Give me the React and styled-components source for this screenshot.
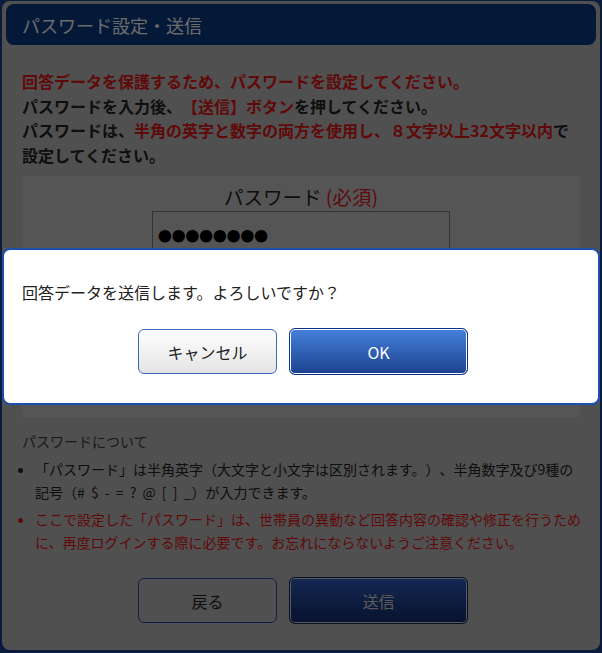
import React from "react";
import styled, { createGlobalStyle } from "styled-components";

const FONT = `"Noto Sans CJK JP", "Noto Sans", sans-serif`;

const Global = createGlobalStyle`
  html, body { margin: 0; padding: 0; background: #193e8e; }
  body {
    font-family: ${FONT};
    width: 602px;
    height: 653px;
    overflow: hidden;
    text-spacing-trim: space-all;
  }
  *, *::before, *::after { box-sizing: border-box; }
`;

const Page = styled.div`
  padding: 1px 2px 3px;
`;

const Panel = styled.section`
  background: #b6b6b6;
  border-radius: 8px;
  padding: 3px 4px 26px;
`;

const Header = styled.h1`
  margin: 0;
  height: 41px;
  display: flex;
  align-items: center;
  padding-left: 16px;
  background: #0b377f;
  border-radius: 8px;
  color: #f4f4f4;
  font-size: 18px;
  font-weight: 400;
`;

const Content = styled.div`
  padding: 0 16px;
`;

const Intro = styled.p`
  margin: 24px 0 0;
  font-size: 16px;
  line-height: 24.5px;
  font-weight: 700;
  color: #222;
`;

const Red = styled.span`
  color: #d81616;
`;

const FieldBox = styled.div`
  margin-top: 9px;
  height: 241px;
  background: #c1c1c1;
  display: flex;
  flex-direction: column;
  align-items: center;
  padding-top: 8px;
`;

const FieldLabel = styled.div`
  font-size: 19.5px;
  line-height: 26px;
  color: #222;
  margin-top: ${(p) => (p.$second ? "18px" : "0")};
`;

const FakeInput = styled.div`
  width: 298px;
  height: 40px;
  margin-top: 1px;
  border: 1px solid #747474;
  background: #c1c1c1;
  padding: 8px 5px 0;
  display: flex;
  align-items: center;
  font-size: 13.75px;
  color: #000;
`;

const About = styled.div`
  margin-top: 13px;
  font-size: 14px;
  line-height: 22px;
  color: #3a3a3a;
`;

const Notes = styled.ul`
  margin: 6px -3px 0 0;
  padding-left: 13px;
  list-style: disc outside;
`;

const Note = styled.li`
  font-size: 14px;
  line-height: 23px;
  color: ${(p) => (p.$red ? "#d81616" : "#222")};
  & + & {
    margin-top: 4px;
  }
`;

const Symbols = styled.span`
  word-spacing: 3px;
`;

const ButtonRow = styled.div`
  margin-top: ${(p) => p.$top || "0"};
  padding-left: 4px;
  display: flex;
  justify-content: center;
  align-items: center;
  gap: 12px;
`;

const Btn = styled.button`
  font-family: ${FONT};
  font-size: 16px;
  border-radius: 6px;
  cursor: pointer;
  padding: 0;
`;

const BackBtn = styled(Btn)`
  width: 139px;
  height: 45px;
  border: 1px solid #24489e;
  background: transparent;
  color: #222;
`;

const SendBtn = styled(Btn)`
  width: 179px;
  height: 47px;
  border: 1px solid #0c2257;
  box-shadow: inset 0 0 0 1px #c8ccd6;
  background: linear-gradient(#2f5bbf, #122a66);
  color: #d0d0d0;
`;

const Overlay = styled.div`
  position: fixed;
  inset: 0;
  background: rgba(0, 0, 0, 0.56);
  display: flex;
  align-items: center;
  justify-content: center;
`;

const Modal = styled.div`
  width: 598px;
  background: #fff;
  border: 2px solid #1c4fae;
  border-radius: 8px;
  padding: 31px 18px 28px;
`;

const Message = styled.p`
  margin: 0 0 25px;
  font-size: 16px;
  line-height: 22px;
  color: #222;
`;

const CancelBtn = styled(Btn)`
  width: 139px;
  height: 45px;
  border: 1px solid #3a67c0;
  background: linear-gradient(#ffffff, #e4e4e4);
  color: #222;
`;

const OkBtn = styled(Btn)`
  width: 179px;
  height: 47px;
  border: 1px solid #0d3585;
  box-shadow: inset 0 0 0 1px #ffffff;
  background: linear-gradient(#4580dc, #1c428e);
  color: #fff;
`;

export default function App() {
  return (
    <>
      <Global />
      <Page>
        <Panel>
          <Header>パスワード設定・送信</Header>
          <Content>
            <Intro>
              <Red>回答データを保護するため、パスワードを設定してください。</Red>
              <br />
              パスワードを入力後、<Red>【送信】ボタン</Red>を押してください。
              <br />
              パスワードは、<Red>半角の英字と数字の両方を使用し、８文字以上32文字以内</Red>で設定してください。
            </Intro>
            <FieldBox>
              <FieldLabel>
                パスワード <Red>(必須)</Red>
              </FieldLabel>
              <FakeInput>●●●●●●●●</FakeInput>
              <FieldLabel $second>
                パスワード（確認用） <Red>(必須)</Red>
              </FieldLabel>
              <FakeInput>●●●●●●●●</FakeInput>
            </FieldBox>
            <About>パスワードについて</About>
            <Notes>
              <Note>
                「パスワード」は半角英字（大文字と小文字は区別されます。）、半角数字及び9種の記号（<Symbols># $ - = ? @ [ ] _</Symbols>）が入力できます。
              </Note>
              <Note $red>
                ここで設定した「パスワード」は、世帯員の異動など回答内容の確認や修正を行うために、再度ログインする際に必要です。お忘れにならないようご注意ください。
              </Note>
            </Notes>
            <ButtonRow $top="23px">
              <BackBtn>戻る</BackBtn>
              <SendBtn>送信</SendBtn>
            </ButtonRow>
          </Content>
        </Panel>
      </Page>
      <Overlay>
        <Modal role="dialog">
          <Message>回答データを送信します。よろしいですか？</Message>
          <ButtonRow>
            <CancelBtn>キャンセル</CancelBtn>
            <OkBtn>OK</OkBtn>
          </ButtonRow>
        </Modal>
      </Overlay>
    </>
  );
}
